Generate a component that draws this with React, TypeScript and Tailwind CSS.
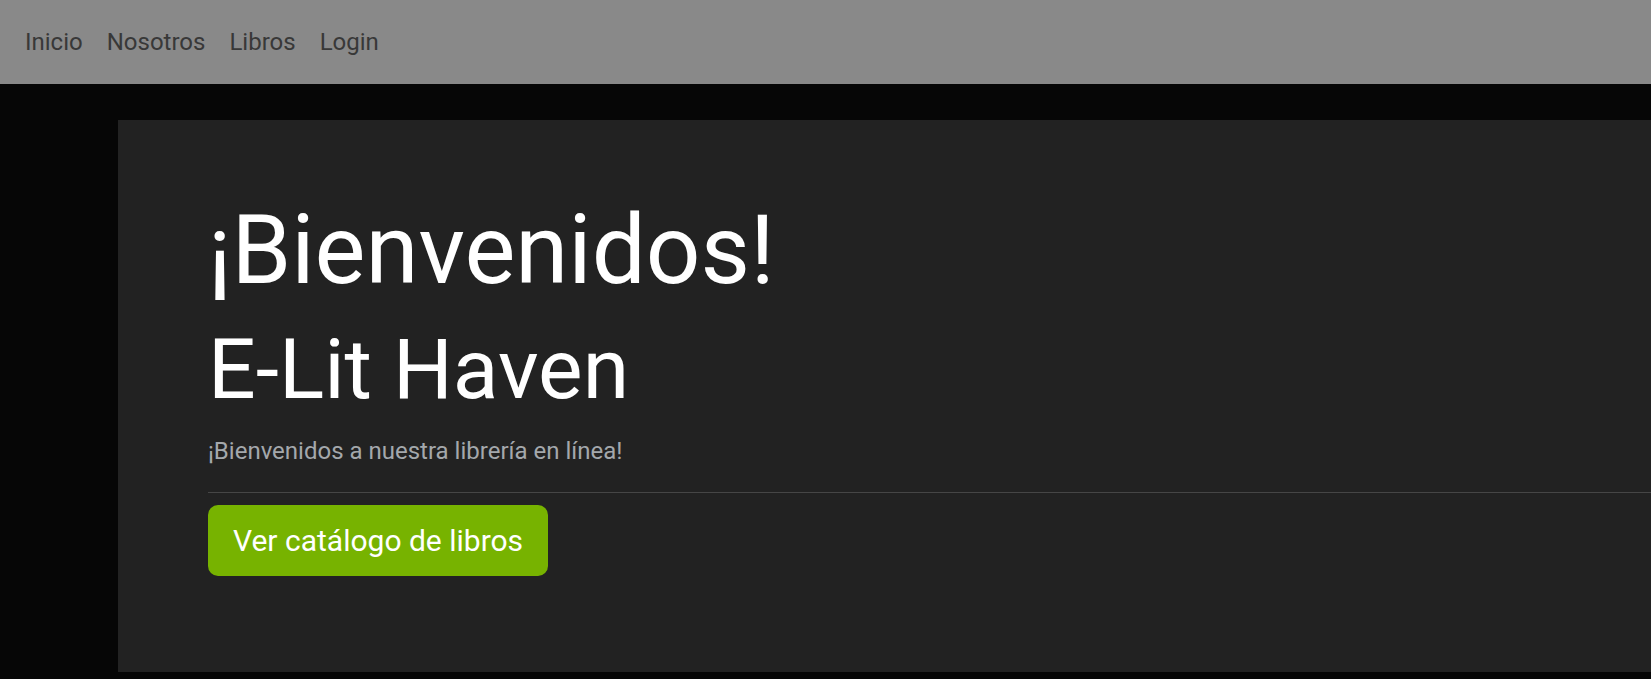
const links = ["Inicio", "Nosotros", "Libros", "Login"];

export default function App() {
  return (
    <div
      className="min-h-screen bg-[#060606]"
      style={{ fontFamily: "Roboto, 'Liberation Sans', sans-serif" }}
    >
      <nav className="flex h-[84px] items-center gap-[24px] bg-[#898989] pl-[25px]">
        {links.map((l) => (
          <a key={l} href="#" className="text-[24px] text-[#383838]">
            {l}
          </a>
        ))}
      </nav>

      <div className="flex pt-[36px] pb-[7px] pl-[118px]">
        <section className="h-[552px] flex-1 bg-[#222222] pt-[73px] pl-[90px]">
          <h1 className="text-[96px] leading-[115px] text-white">¡Bienvenidos!</h1>
          <h2 className="mt-[10px] text-[84px] leading-[103px] text-white">E-Lit Haven</h2>
          <p className="mt-[15px] text-[24px] leading-[30px] text-[#a4a8ac]">
            ¡Bienvenidos a nuestra librería en línea!
          </p>
          <hr className="mt-[26px] border-t border-[#464646]" />
          <a
            href="#"
            className="mt-[12px] inline-block rounded-[10px] bg-[#77b300] px-[25px] py-[13px] text-[30px] leading-[45px] text-white"
          >
            Ver catálogo de libros
          </a>
        </section>
      </div>
    </div>
  );
}
